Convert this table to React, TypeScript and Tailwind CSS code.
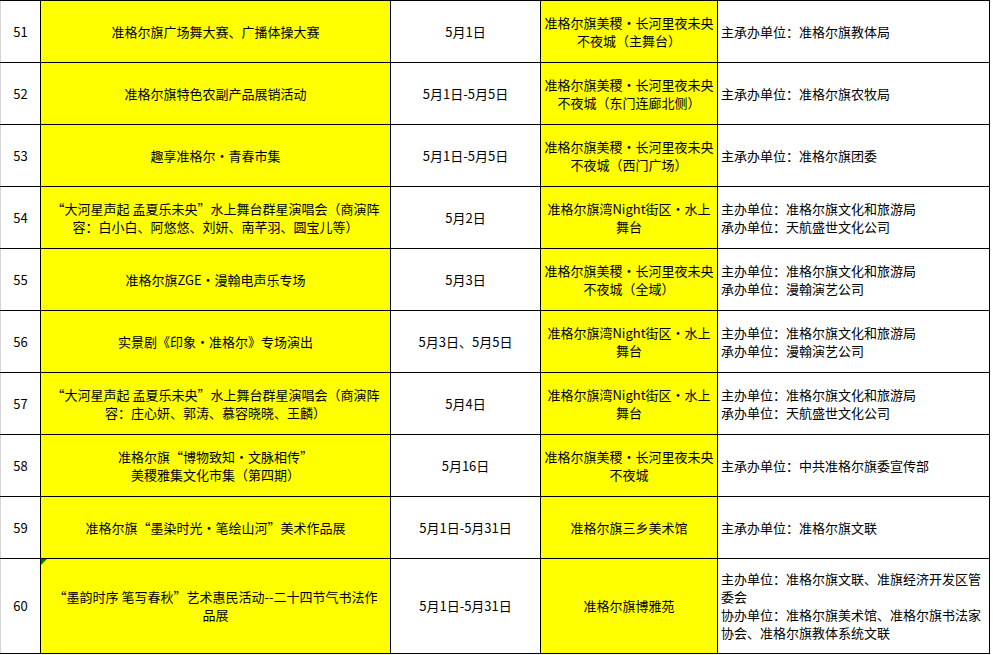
import React from 'react'

// 活动列表（第 51–60 项），按原表格逐行还原
type Row = {
  no: number
  name: string[]
  date: string
  venue: string[]
  org: string[]
  h: string
  note?: boolean
}

const rows: Row[] = [
  { no: 51, name: ['准格尔旗广场舞大赛、广播体操大赛'], date: '5月1日', venue: ['准格尔旗美稷·长河里夜未央', '不夜城（主舞台）'], org: ['主承办单位：准格尔旗教体局'], h: 'h-[61px]' },
  { no: 52, name: ['准格尔旗特色农副产品展销活动'], date: '5月1日-5月5日', venue: ['准格尔旗美稷·长河里夜未央', '不夜城（东门连廊北侧）'], org: ['主承办单位：准格尔旗农牧局'], h: 'h-[61px]' },
  { no: 53, name: ['趣享准格尔·青春市集'], date: '5月1日-5月5日', venue: ['准格尔旗美稷·长河里夜未央', '不夜城（西门广场）'], org: ['主承办单位：准格尔旗团委'], h: 'h-[61px]' },
  { no: 54, name: ['“大河星声起 孟夏乐未央”水上舞台群星演唱会（商演阵', '容：白小白、阿悠悠、刘妍、南芊羽、圆宝儿等）'], date: '5月2日', venue: ['准格尔旗湾Night街区·水上', '舞台'], org: ['主办单位：准格尔旗文化和旅游局', '承办单位：天航盛世文化公司'], h: 'h-[61px]' },
  { no: 55, name: ['准格尔旗ZGE·漫翰电声乐专场'], date: '5月3日', venue: ['准格尔旗美稷·长河里夜未央', '不夜城（全域）'], org: ['主办单位：准格尔旗文化和旅游局', '承办单位：漫翰演艺公司'], h: 'h-[61px]' },
  { no: 56, name: ['实景剧《印象·准格尔》专场演出'], date: '5月3日、5月5日', venue: ['准格尔旗湾Night街区·水上', '舞台'], org: ['主办单位：准格尔旗文化和旅游局', '承办单位：漫翰演艺公司'], h: 'h-[61px]' },
  { no: 57, name: ['“大河星声起 孟夏乐未央”水上舞台群星演唱会（商演阵', '容：庄心妍、郭涛、慕容晓晓、王麟）'], date: '5月4日', venue: ['准格尔旗湾Night街区·水上', '舞台'], org: ['主办单位：准格尔旗文化和旅游局', '承办单位：天航盛世文化公司'], h: 'h-[61px]' },
  { no: 58, name: ['准格尔旗“博物致知·文脉相传”', '美稷雅集文化市集（第四期）'], date: '5月16日', venue: ['准格尔旗美稷·长河里夜未央', '不夜城'], org: ['主承办单位：中共准格尔旗委宣传部'], h: 'h-[61px]' },
  { no: 59, name: ['准格尔旗“墨染时光·笔绘山河”美术作品展'], date: '5月1日-5月31日', venue: ['准格尔旗三乡美术馆'], org: ['主承办单位：准格尔旗文联'], h: 'h-[61px]' },
  { no: 60, name: ['“墨韵时序 笔写春秋”艺术惠民活动--二十四节气书法作', '品展'], date: '5月1日-5月31日', venue: ['准格尔旗博雅苑'], org: ['主办单位：准格尔旗文联、准旗经济开发区管', '委会', '协办单位：准格尔旗美术馆、准格尔旗书法家', '协会、准格尔旗教体系统文联'], h: 'h-[94px]', note: true },
]

function Lines({ lines }: { lines: string[] }) {
  return (
    <div className="leading-[18px]">
      {lines.map((l, i) => (
        <div key={i} className="whitespace-nowrap">{l}</div>
      ))}
    </div>
  )
}

export default function App() {
  return (
    <div
      className="w-[993px] h-[655px] bg-white overflow-hidden text-[13px] text-black"
      style={{ fontFamily: '"Noto Sans CJK SC", "Liberation Sans", sans-serif' }}
    >
      <div className="w-[990px] bg-black pt-px pr-px pb-px grid grid-cols-[40px_349px_149px_176px_271px] gap-px">
        {rows.map((r) => (
          <React.Fragment key={r.no}>
            <div className={`${r.h} bg-white border-l border-[#d4d4d4] flex items-center justify-center`}>{r.no}</div>
            <div className={`${r.h} relative bg-[#ffff00] flex items-center justify-center text-center`}>
              {r.note && (
                <span className="absolute left-0 top-0 w-0 h-0 border-t-[6px] border-r-[6px] border-t-[#008000] border-r-transparent" />
              )}
              <Lines lines={r.name} />
            </div>
            <div className={`${r.h} bg-white flex items-center justify-center`}>{r.date}</div>
            <div className={`${r.h} bg-[#ffff00] flex items-center justify-center text-center`}>
              <Lines lines={r.venue} />
            </div>
            <div className={`${r.h} bg-white flex items-center pl-[3px]`}>
              <Lines lines={r.org} />
            </div>
          </React.Fragment>
        ))}
      </div>
    </div>
  )
}
